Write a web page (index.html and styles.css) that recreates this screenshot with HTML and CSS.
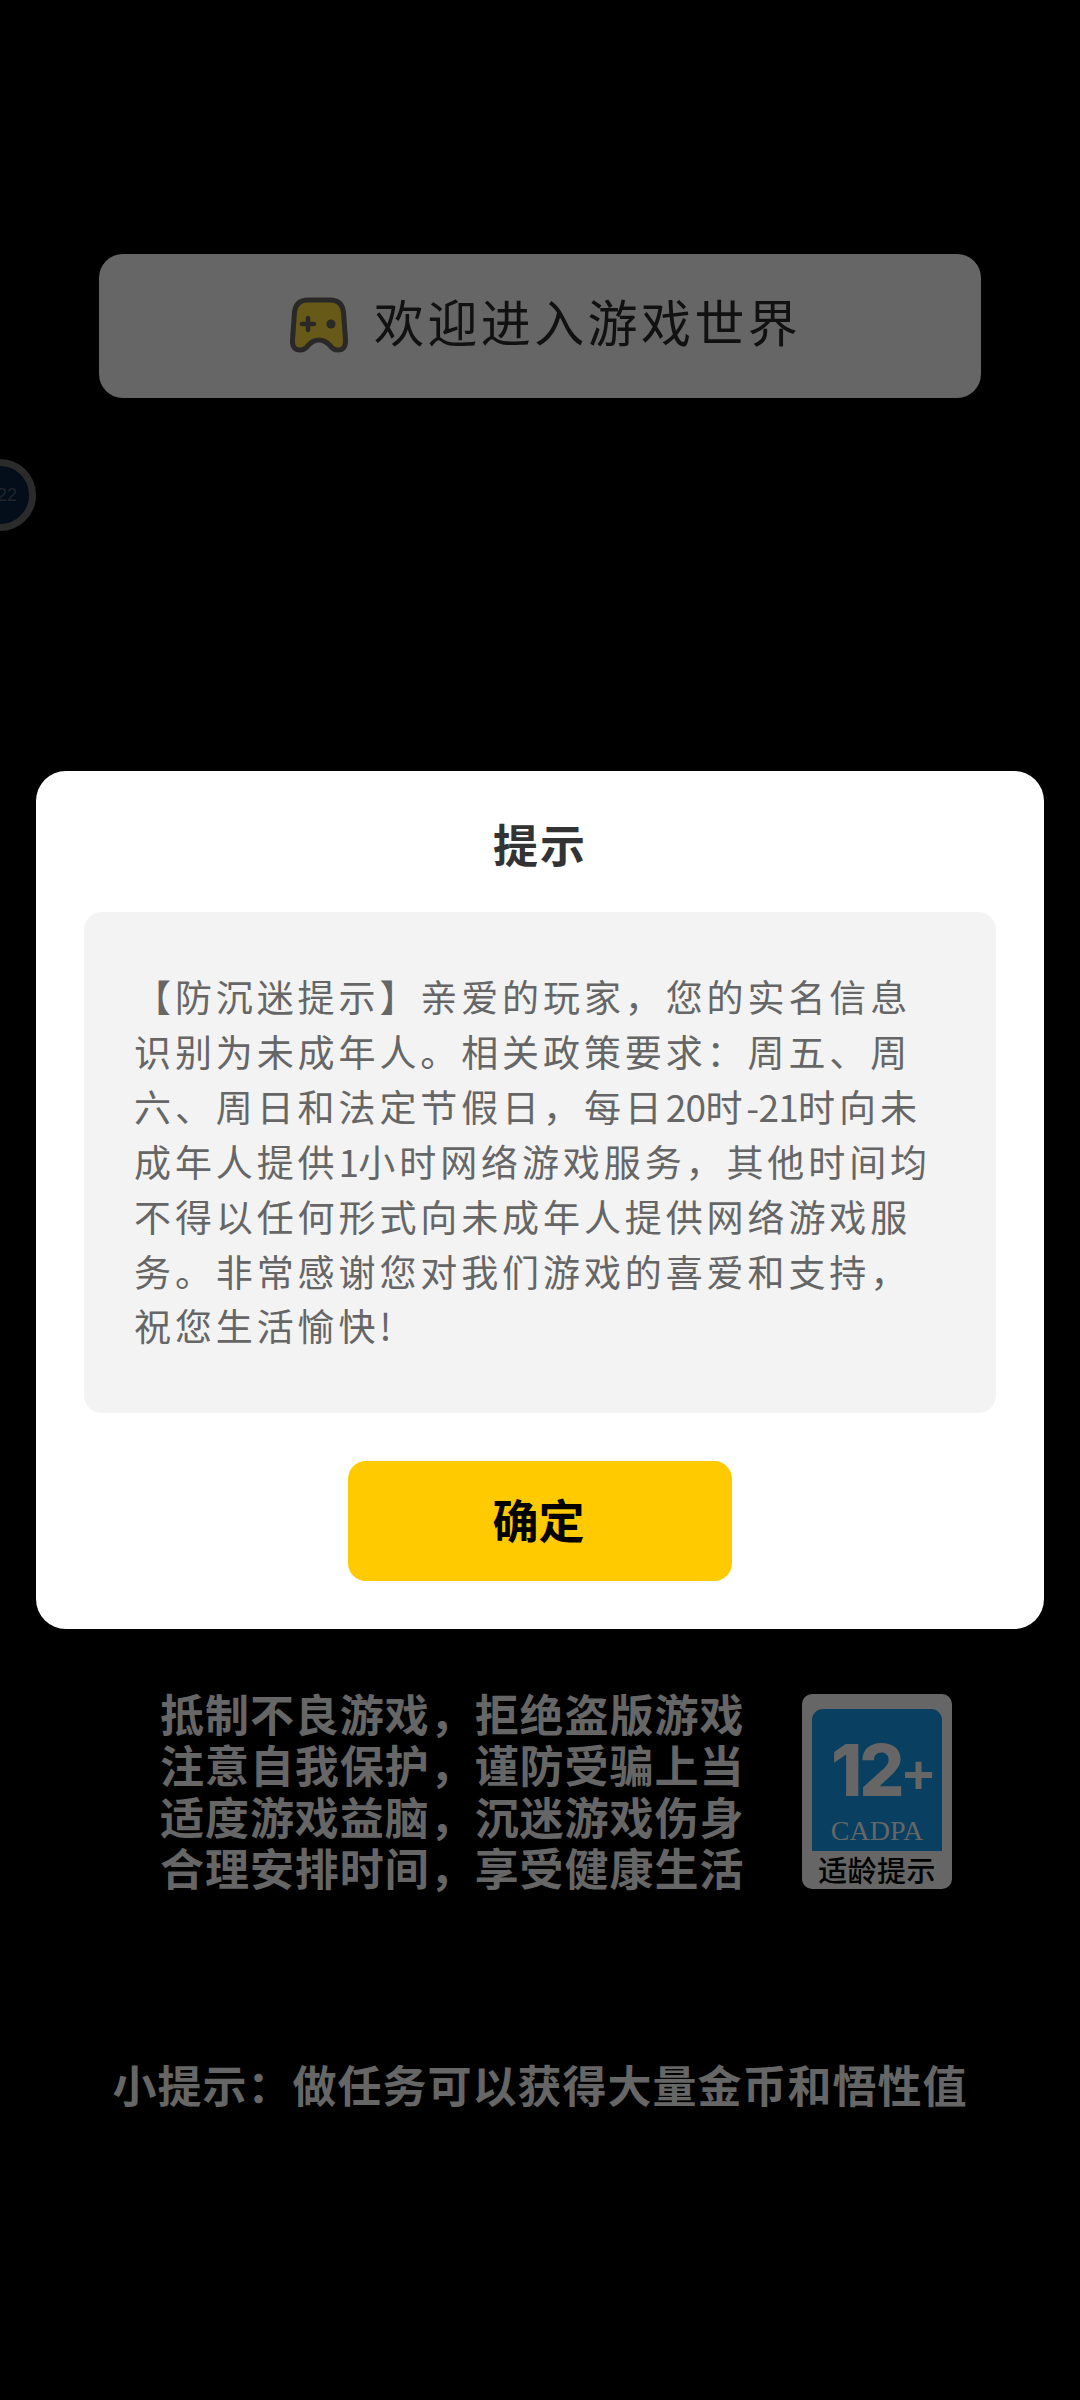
FILE: index.html
```html
<!DOCTYPE html>
<html lang="zh-CN">
<head>
<meta charset="utf-8">
<title>提示</title>
<link rel="stylesheet" href="styles.css">
</head>
<body>
<div class="screen">
  <header class="welcome">
    <svg class="pad" viewBox="0 0 60 56" width="60" height="56">
      <path d="M19 3H41Q53 3 54.500 15L56.500 43Q57 53 49 53Q44 53 41 48.500Q36 43 30 43Q24 43 19 48.500Q16 53 11 53Q3 53 3.500 43L5.500 15Q7 3 19 3Z" fill="#675a18" stroke="#2b2927" stroke-width="5" stroke-linejoin="round"/>
      <path d="M13 27H25M19 21V33" stroke="#2b2927" stroke-width="4.600" stroke-linecap="round"/>
      <circle cx="42" cy="27" r="4.600" fill="#2b2927"/>
    </svg>
    <span class="welcome-text">欢迎进入游戏世界</span>
  </header>

  <main class="modal">
    <h1 class="modal-title">提示</h1>
    <div class="notice">
      <p>【防沉迷提示】亲爱的玩家，您的实名信息</p>
      <p>识别为未成年人。相关政策要求：周五、周</p>
      <p>六、周日和法定节假日，每日<span class="num">20</span>时<span class="num">-21</span>时向未</p>
      <p>成年人提供<span class="num">1</span>小时网络游戏服务，其他时间均</p>
      <p>不得以任何形式向未成年人提供网络游戏服</p>
      <p>务。非常感谢您对我们游戏的喜爱和支持，</p>
      <p>祝您生活愉快<span class="num">!</span></p>
    </div>
    <button class="confirm">确定</button>
  </main>

  <section class="advice">
    <div class="advice-text">
      <p>抵制不良游戏，拒绝盗版游戏</p>
      <p>注意自我保护，谨防受骗上当</p>
      <p>适度游戏益脑，沉迷游戏伤身</p>
      <p>合理安排时间，享受健康生活</p>
    </div>
    <div class="rating">
      <div class="rating-panel">
        <div class="age">12<span class="plus">+</span></div>
        <div class="org">CADPA</div>
      </div>
      <div class="rating-label">适龄提示</div>
    </div>
  </section>

  <footer class="tip">小提示：做任务可以获得大量金币和悟性值</footer>

  <div class="float-ball"><span>22</span></div>
</div>
</body>
</html>
```

FILE: styles.css
```css
* { box-sizing: border-box; }
body {
  margin: 0;
  background: #000;
  font-family: "Noto Sans CJK SC", sans-serif;
}
p, h1 { margin: 0; }
.screen {
  position: relative;
  width: 1080px;
  height: 2400px;
  padding-top: 254px;
  overflow: hidden;
  display: flex;
  flex-direction: column;
  align-items: center;
  background: #000;
}
.welcome {
  width: 882px;
  height: 144px;
  padding: 0 0 12px 190px;
  display: flex;
  align-items: center;
  background: #666;
  border-radius: 24px;
}
.pad { margin-top: 9px; }
.welcome-text {
  margin-left: 25px;
  font-size: 50px;
  line-height: 60px;
  letter-spacing: 3.400px;
  font-weight: 400;
  color: #111;
}
.modal {
  width: 1008px;
  height: 858px;
  margin-top: 373px;
  padding: 43px 48px 48px;
  display: flex;
  flex-direction: column;
  align-items: center;
  background: #fff;
  border-radius: 30px;
}
.modal-title {
  height: 98px;
  font-size: 45px;
  line-height: 60px;
  letter-spacing: 2px;
  font-weight: 700;
  color: #333;
}
.notice {
  width: 912px;
  height: 501px;
  padding: 57px 0 0 50px;
  background: #f3f3f3;
  border-radius: 18px;
}
.notice p {
  font-size: 37px;
  line-height: 54.900px;
  letter-spacing: 3.900px;
  font-weight: 400;
  color: #666;
  white-space: nowrap;
}
.notice .num { letter-spacing: -0.700px; }
.confirm {
  width: 384px;
  height: 120px;
  margin-top: 48px;
  padding: 0 3px 7px 0;
  border: 0;
  border-radius: 18px;
  background: #ffcb00;
  color: #000;
  font-family: inherit;
  font-size: 46px;
  font-weight: 700;
}
.advice {
  width: 792px;
  margin-top: 59px;
  display: flex;
  justify-content: space-between;
}
.advice-text {
  margin-left: 16px;
}
.advice-text p {
  font-size: 44px;
  line-height: 51.300px;
  letter-spacing: 0.950px;
  font-weight: 700;
  color: #666;
  white-space: nowrap;
}
.rating {
  width: 150px;
  height: 195px;
  margin-top: 6px;
  margin-right: -16px;
  padding: 15px 10px 0;
  background: #666;
  border-radius: 10px;
}
.rating-panel {
  height: 142px;
  padding-top: 28px;
  background: #093f60;
  border-radius: 11px 11px 0 0;
  color: #666;
}
.age {
  height: 66px;
  padding-left: 19px;
  display: flex;
  align-items: center;
  font-family: Inter, sans-serif;
  font-size: 71px;
  line-height: 66px;
  letter-spacing: -3px;
  font-weight: 800;
}
.plus {
  margin: 7px 0 0 1px;
  font-family: "Liberation Sans", sans-serif;
  font-size: 54px;
  letter-spacing: 0;
}
.org {
  margin-top: 10px;
  font-family: "Liberation Serif", serif;
  font-size: 28px;
  line-height: 36px;
  text-align: center;
}
.rating-label {
  font-size: 29px;
  line-height: 37px;
  letter-spacing: 0.400px;
  font-weight: 500;
  text-align: center;
  color: #000;
  white-space: nowrap;
}
.tip {
  margin-top: 158px;
  font-size: 44px;
  line-height: 66px;
  letter-spacing: 1px;
  font-weight: 700;
  color: #666;
  white-space: nowrap;
}
.float-ball {
  position: absolute;
  left: -36px;
  top: 459px;
  width: 72px;
  height: 72px;
  padding-right: 12px;
  display: flex;
  align-items: center;
  justify-content: flex-end;
  border: 7px solid #2b2b2b;
  border-radius: 50%;
  background: #040d1a;
  color: #20242b;
  font-family: "Liberation Sans", sans-serif;
  font-size: 18px;
}
```
